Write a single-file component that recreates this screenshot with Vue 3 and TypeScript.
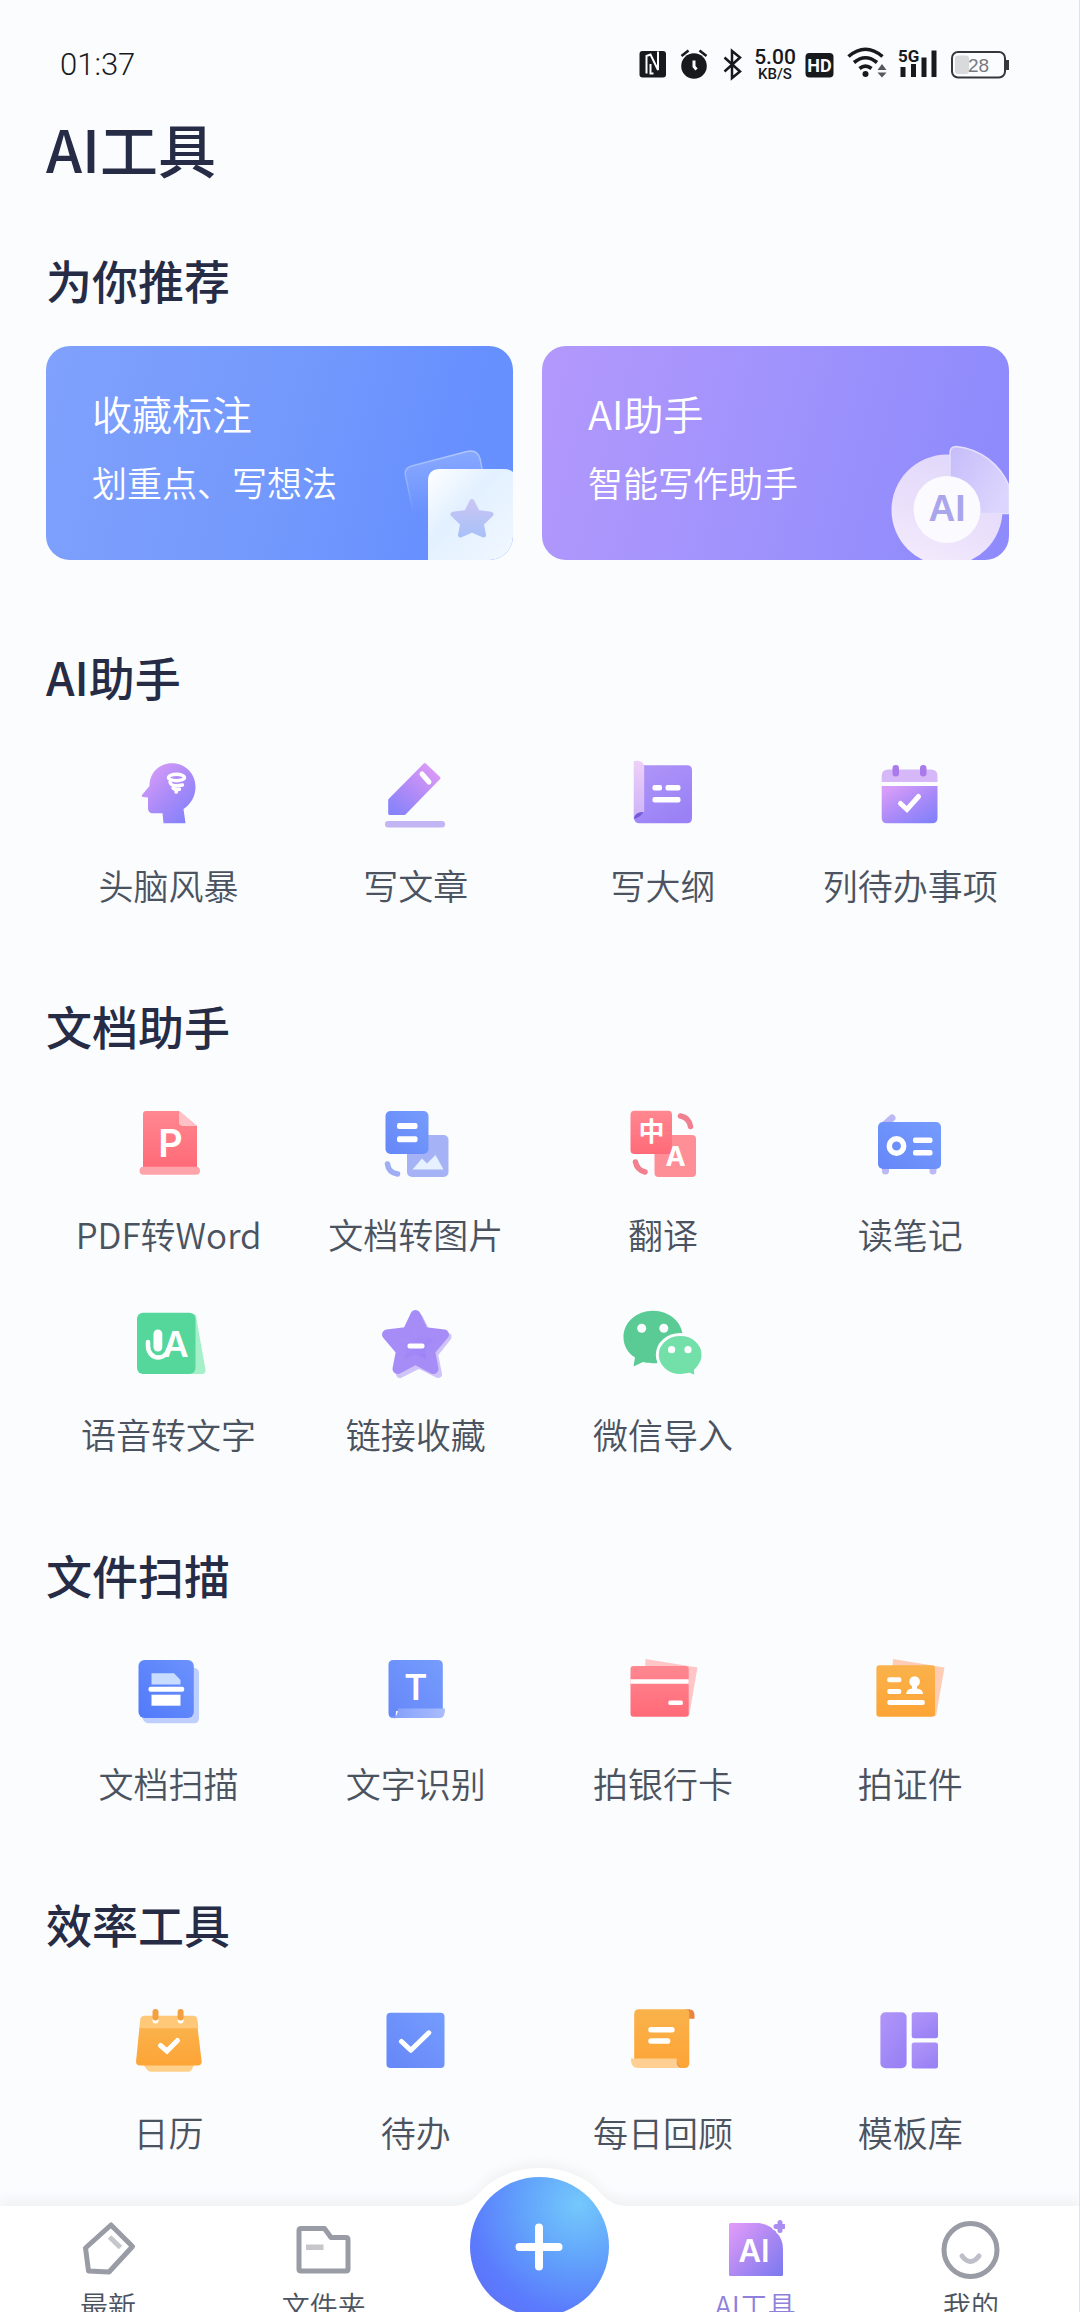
<script setup lang="ts">
interface Tool {
  name: string
  icon: string
}

interface ToolSection {
  title: string
  tools: Tool[]
}

interface Tab {
  name: string
  icon: string
  active?: boolean
}

const letter = 'font-family="Inter, Liberation Sans, sans-serif" text-anchor="middle" fill="#fff"'

// Inner markup of every tool icon, drawn on an 80 x 80 grid.
const icons: Record<string, string> = {
  head: `<path fill="url(#g-violet)" d="M43 8.300C56 8.300 66.500 18.500 66.500 32c0 9.500-5 17.500-12 22l2 14.300h-22l-1-10H24c-3 0-5-2-5-5V42.500l-5-.5c-1.200-.2-1.500-1.200-.8-2.200L20.500 31C20.500 18 30 8.300 43 8.300Z"/><g fill="none" stroke="#fff" stroke-width="3.400" stroke-linecap="round"><ellipse cx="47.500" cy="22.500" rx="8" ry="3.200"/><path d="M41 27c1 5 7 4 12.500 3M44 33c1 2 3 1.800 6.500 1.200M47 37h.5"/></g>`,
  pen: `<path fill="url(#g-violet-up)" stroke="url(#g-violet-up)" stroke-width="3" stroke-linejoin="round" d="M48.800 9.500 63 23 28.500 58.500H13.700V45Z"/><path stroke="#fff" stroke-width="5" stroke-linecap="round" d="m46 19 7 8"/><rect x="9" y="66" width="60" height="6.500" rx="3" fill="#c3b5f4"/>`,
  outline: `<path fill="url(#g-purple)" d="M20 10.300h44q5 0 5 5V63.300q0 5-5 5H16.500q-5.500 0-5.500-6L20 55Z"/><path fill="url(#g-fold)" d="M10.700 6q10-1.500 10.500 6v45q-7 .5-10.500 6Z"/><path fill="#7458d8" d="M10.700 64q1-7 9.500-7-2 5-9.500 7Z"/><g fill="#fff"><rect x="29.500" y="30" width="9.500" height="5.600" rx="2"/><rect x="42.500" y="30" width="15" height="5.600" rx="2"/><rect x="29.500" y="42" width="28" height="5.600" rx="2"/></g>`,
  todo: `<path fill="#d6b8f8" d="M11.700 27v-6q0-6.500 6.500-6.500H61q6.500 0 6.500 6.500v6Z"/><path fill="url(#g-violet)" d="M11.700 31h55.800v32q0 5.300-5.300 5.300H17q-5.300 0-5.300-5.300Z"/><g fill="#a97bea"><rect x="22.500" y="10" width="6.500" height="11.500" rx="3.200"/><rect x="50" y="10" width="6.500" height="11.500" rx="3.200"/></g><path fill="none" stroke="#fff" stroke-width="5" stroke-linecap="round" d="m30.500 48.500 6.500 6 11.500-13"/>`,
  pdf: `<path fill="url(#g-red)" d="M14 10q0-3 3-3h33l18 15v42H14Z"/><path fill="#ffc0c6" d="M50 7v11q0 4 4 4h14Z"/><rect x="10.500" y="62.700" width="60.500" height="8" rx="4" fill="#ffa3ab"/><text x="41.500" y="53" font-size="38" font-weight="600" ${letter}>P</text>`,
  docImage: `<rect x="31" y="31" width="41.500" height="42" rx="5" fill="#a5b3f6"/><path fill="#e6f0ff" d="m36.500 65.500 9.500-11 5 5 8.500-8.500L67.500 65.500Z"/><rect x="9.500" y="7" width="43" height="43" rx="5" fill="url(#g-blue)"/><g fill="#fff"><rect x="21" y="19" width="20.500" height="6" rx="2"/><rect x="21" y="32.300" width="20.500" height="6" rx="2"/></g><path fill="none" stroke="#9fadf5" stroke-width="5.500" stroke-linecap="round" d="M11.500 60q1 8.500 10 10"/>`,
  translate: `<rect x="31.500" y="31" width="41.500" height="42" rx="4" fill="#ff8f97"/><rect x="7.500" y="6.700" width="41.500" height="43.300" rx="4" fill="url(#g-red)"/><text x="28.500" y="37" font-size="26" font-weight="700" text-anchor="middle" fill="#fff" font-family="Noto Sans CJK SC, sans-serif">中</text><text x="52.500" y="62" font-size="27" font-weight="700" ${letter}>A</text><g fill="none" stroke="#f0808f" stroke-width="5.500" stroke-linecap="round"><path d="M57.500 12q8.500 1.500 10 10.500M12.500 58q1.500 8 9.500 10"/></g>`,
  radio: `<path stroke="#bcb8f6" stroke-width="7" stroke-linecap="round" d="m13 22 9-8M15.500 62v5M63 62v5"/><rect x="8" y="18" width="63" height="47" rx="5" fill="url(#g-blue)"/><circle cx="26.500" cy="42" r="7.200" fill="none" stroke="#fff" stroke-width="5.500"/><g fill="#fff"><rect x="43" y="33.500" width="19.500" height="5.500" rx="2"/><rect x="43" y="46" width="19.500" height="5.500" rx="2"/></g>`,
  voice: `<path fill="#a5f0c8" d="M62 10q4-1 5 2l9.500 54q0 4-3.500 4H60Z"/><rect x="8" y="8.700" width="58.500" height="61.300" rx="6" fill="#55d79b"/><rect x="24.500" y="25.500" width="8.800" height="22" rx="4.400" fill="#fff"/><path fill="none" stroke="#fff" stroke-width="4.500" stroke-linecap="round" d="M19 38v4c0 6 4 11.500 10.500 11.500 5.500 0 8-3 10-8"/><text x="46.500" y="53" font-size="36" font-weight="600" ${letter}>A</text>`,
  star: `<path fill="#cfc3f8" stroke="#cfc3f8" stroke-width="8" stroke-linejoin="round" transform="translate(3.500 3)" d="m39.500 11 8.500 17 20 2-13.500 17 4 20-19-9.500-19 9.500 4-20L10.500 30l20-2Z"/><path fill="url(#g-purple)" stroke="#a58cf6" stroke-width="10" stroke-linejoin="round" d="m39.500 11 8 17 20.500 2.500-14 16.500 3.500 18-18-9.500-18 9.500 3.500-18-14-16.500L31.500 28Z"/><rect x="31.500" y="39.500" width="17" height="5" rx="2" fill="#fff"/>`,
  wechat: `<path fill="#5acb95" d="M30 6.700c16.500 0 29.800 11.500 29.800 26.500S46.500 59.300 30 59.300c-3.500 0-7-.4-10-1.200L10.500 62.500l1.500-9C5 49 .5 42 .5 33.200.5 18.200 13.500 6.700 30 6.700Z"/><path fill="#73dfa9" stroke="#fafcfe" stroke-width="3" d="M57.300 30.500c12.500 0 22.700 8.700 22.700 20.300 0 6.500-3 11.500-7.500 15.500l.5 6.500-6.500-2.500c-3 .8-6 1.200-9.200 1.200-12.500 0-23-9-23-20.700s10.500-20.300 23-20.300Z"/><g fill="#fafcfe"><circle cx="18.700" cy="24.300" r="4.500"/><circle cx="40.800" cy="24.300" r="4.500"/><circle cx="48.600" cy="45.700" r="3.600"/><circle cx="65" cy="45.700" r="3.600"/></g>`,
  scan: `<path fill="#bfcffd" d="M60 14q10 0 10 6v45q0 5.300-5.300 5.300H20q-5 0-7-6Z"/><rect x="9.500" y="7" width="55.300" height="58" rx="6" fill="url(#g-blue-deep)"/><path fill="#c8dcff" d="M22.500 20.300H45L51.500 27v4.500h-29Z"/><rect x="19.500" y="33.700" width="35.700" height="5" rx="2" fill="#fff"/><path fill="#fff" d="M22.500 41.700h29v11h-29Z"/>`,
  text: `<path fill="url(#g-blue)" d="M12.500 12q0-5 5-5h44.300q5 0 5 5v46H20q0 7-3 7-4.500 0-4.500-5Z"/><path fill="#7d99fb" d="M14 62q3 3 6 0v3q-4 1-6-3Z"/><path fill="url(#g-roll)" d="M22 55.500h47q0 9.500-5 9.500H17q5-2 5-9.500Z"/><text x="39.700" y="47" font-size="35" font-weight="600" ${letter}>T</text>`,
  bank: `<path fill="#ffc6c8" d="M22.500 6 74.500 14.500 66 63H20Z"/><path fill="url(#g-red)" d="M7.500 16q0-3 3-3h52.200q3 0 3 3v44.700q0 3-3 3H10.500q-3 0-3-3Z"/><path fill="#fff" d="M7.500 26.300h58.200v4.400H7.500Z"/><rect x="45.400" y="47.500" width="14.400" height="4.500" rx="1.500" fill="#fff"/>`,
  idCard: `<path fill="#ffcdb6" d="M23 6 74.500 14.500 66 63H20Z"/><rect x="6.400" y="12.300" width="58.600" height="51.400" rx="3" fill="url(#g-orange)"/><g fill="#fff"><rect x="17.300" y="24.200" width="14" height="5" rx="2"/><rect x="17.300" y="36" width="14" height="5" rx="2"/><rect x="17.300" y="47" width="37.500" height="5" rx="2"/><circle cx="44.600" cy="28.500" r="5.300"/><path d="M42 31h5v4.500q6 .8 6 5.500H36.200q0-4.700 5.800-5.500Z"/></g>`,
  calendar: `<path fill="#ffd08a" d="M14.400 63H65l-2.400 5q-1 1.700-3 1.700H21.500q-2 0-3-1.700Z"/><path fill="url(#g-orange)" d="M10.500 25h58l4.100 34q.4 4.500-4 4.500H11q-4.300 0-3.900-4.500Z"/><path fill="#ffc878" d="m10.300 26.300 1-9q.5-3.600 4-3.600h49q3.500 0 4 3.600l1.200 9Z"/><g fill="#fff"><rect x="23.500" y="15" width="6" height="6.500" rx="3"/><rect x="48.600" y="15" width="6" height="6.500" rx="3"/></g><g fill="#f4a040"><rect x="23.500" y="7" width="6" height="11.500" rx="3"/><rect x="48.600" y="7" width="6" height="11.500" rx="3"/></g><path fill="none" stroke="#fff" stroke-width="5" stroke-linecap="round" d="m31.500 43.500 6.500 5.500 10.500-10.500"/>`,
  check: `<rect x="10.500" y="10.700" width="58" height="55.300" rx="4" fill="url(#g-blue)"/><path fill="none" stroke="#fff" stroke-width="5" stroke-linecap="round" stroke-linejoin="round" d="m25.500 39.500 9.300 8.800 18-17.500"/>`,
  review: `<path fill="#e8853f" d="M62 7.300h4q5.500 0 5.500 6v3.500H62Z"/><path fill="url(#g-orange)" d="M11.200 12q0-4.700 4.700-4.700H63q3.300 0 3.300 4V61q0 5-5 5H50L11.200 58Z"/><path fill="#ffce92" d="M7.800 56.500h45.700Q54 64 59 66H15q-7 0-7.200-9.500Z"/><path fill="#b5702a" d="M53.500 57.500q.5 6.500 5.500 8.500-5.500-.5-5.500-8.500Z"/><g fill="#fff"><rect x="25.300" y="25" width="26.300" height="5.500" rx="2.500"/><rect x="25.300" y="36.300" width="22" height="5.500" rx="2.500"/></g>`,
  template: `<g fill="url(#g-purple)"><rect x="10.400" y="10.300" width="26.200" height="56" rx="5"/><rect x="41.700" y="10.300" width="26.300" height="26" rx="2.500"/><rect x="41.700" y="40.500" width="26.300" height="26" rx="2.500"/></g>`,
}

const sections: ToolSection[] = [
  {
    title: 'AI助手',
    tools: [
      { name: '头脑风暴', icon: 'head' },
      { name: '写文章', icon: 'pen' },
      { name: '写大纲', icon: 'outline' },
      { name: '列待办事项', icon: 'todo' },
    ],
  },
  {
    title: '文档助手',
    tools: [
      { name: 'PDF转Word', icon: 'pdf' },
      { name: '文档转图片', icon: 'docImage' },
      { name: '翻译', icon: 'translate' },
      { name: '读笔记', icon: 'radio' },
      { name: '语音转文字', icon: 'voice' },
      { name: '链接收藏', icon: 'star' },
      { name: '微信导入', icon: 'wechat' },
    ],
  },
  {
    title: '文件扫描',
    tools: [
      { name: '文档扫描', icon: 'scan' },
      { name: '文字识别', icon: 'text' },
      { name: '拍银行卡', icon: 'bank' },
      { name: '拍证件', icon: 'idCard' },
    ],
  },
  {
    title: '效率工具',
    tools: [
      { name: '日历', icon: 'calendar' },
      { name: '待办', icon: 'check' },
      { name: '每日回顾', icon: 'review' },
      { name: '模板库', icon: 'template' },
    ],
  },
]

// Tab icons use a 60 x 60 grid.
const leftTabs: Tab[] = [
  {
    name: '最新',
    icon: `<path fill="none" stroke="#999ba5" stroke-width="5" stroke-linejoin="round" d="M33 6 54.500 27.500 31 53 10.500 52 7.500 29Z"/><path stroke="#c6c7ca" stroke-width="5" d="m31.500 18 11 10.500"/>`,
  },
  {
    name: '文件夹',
    icon: `<path fill="none" stroke="#999ba5" stroke-width="5" stroke-linejoin="round" d="M7 9.500h23.500l6.500 9h15q2 0 2 2V50q0 2-2 2H7q-2 0-2-2V11.500q0-2 2-2Z"/><path fill="#c6c7ca" d="M12 25.500h17.500v5.500H12Z"/>`,
  },
]

const rightTabs: Tab[] = [
  {
    name: 'AI工具',
    active: true,
    icon: `<path fill="url(#g-tab)" d="M4 5.500Q4 4 5.500 4H34c14 2 24 13 24 26v25.500q0 1.500-1.500 1.500h-51Q4 57 4 55.500Z"/><path stroke="#fff" stroke-width="8" stroke-linecap="round" d="M55 3.500v8M51 7.500h8"/><path stroke="#a98df0" stroke-width="5" stroke-linecap="round" d="M55 3.500v8M51 7.500h8"/><text x="29" y="43" font-size="31" font-weight="600" ${letter}>AI</text>`,
  },
  {
    name: '我的',
    icon: `<circle cx="29.500" cy="31" r="26.500" fill="none" stroke="#999ba5" stroke-width="5"/><path fill="none" stroke="#bfbfca" stroke-width="5" stroke-linecap="round" d="M21 37q8.500 11 17 0"/>`,
  },
]
</script>

<template>
  <div class="page">
    <svg class="defs" width="0" height="0" aria-hidden="true">
      <defs>
        <linearGradient id="g-violet" x1="0.1" y1="0.1" x2="0.9" y2="1">
          <stop offset="0" stop-color="#d79cf8" /><stop offset="0.5" stop-color="#a98af8" /><stop offset="1" stop-color="#8181fb" />
        </linearGradient>
        <linearGradient id="g-violet-up" x1="0.9" y1="0" x2="0.1" y2="1">
          <stop offset="0" stop-color="#e09bf6" /><stop offset="0.55" stop-color="#b08bf7" /><stop offset="1" stop-color="#8783fa" />
        </linearGradient>
        <linearGradient id="g-purple" x1="0" y1="0" x2="0.6" y2="1">
          <stop offset="0" stop-color="#b096f8" /><stop offset="1" stop-color="#9a82f6" />
        </linearGradient>
        <linearGradient id="g-fold" x1="0" y1="0" x2="0" y2="1">
          <stop offset="0" stop-color="#eed0f8" /><stop offset="1" stop-color="#cdb4f8" />
        </linearGradient>
        <linearGradient id="g-red" x1="0" y1="0" x2="0" y2="1">
          <stop offset="0" stop-color="#ff8790" /><stop offset="1" stop-color="#ff6a78" />
        </linearGradient>
        <linearGradient id="g-blue" x1="1" y1="0" x2="0" y2="1">
          <stop offset="0" stop-color="#759cfd" /><stop offset="1" stop-color="#6687f8" />
        </linearGradient>
        <linearGradient id="g-blue-deep" x1="1" y1="0" x2="0" y2="1">
          <stop offset="0" stop-color="#6b92fc" /><stop offset="1" stop-color="#527afa" />
        </linearGradient>
        <linearGradient id="g-roll" x1="0" y1="0" x2="1" y2="0">
          <stop offset="0" stop-color="#85a0fb" /><stop offset="1" stop-color="#a9bcfd" />
        </linearGradient>
        <linearGradient id="g-orange" x1="0" y1="0" x2="0" y2="1">
          <stop offset="0" stop-color="#fab24b" /><stop offset="1" stop-color="#fda436" />
        </linearGradient>
        <linearGradient id="g-tab" x1="0" y1="0.1" x2="1" y2="1">
          <stop offset="0" stop-color="#e09af9" /><stop offset="0.5" stop-color="#ab88f2" /><stop offset="1" stop-color="#7a79f0" />
        </linearGradient>
      </defs>
    </svg>

    <header class="status">
      <time class="clock">01:37</time>
      <div class="indicators">
        <svg width="41" height="40" viewBox="0 0 41 40" aria-hidden="true">
          <rect x="0.500" y="7" width="26.500" height="26.500" rx="3" fill="#18191c" />
          <path d="M7.500 29.500V12l4-1.500 7.500 15.500V7.500M11.500 20v9.500h3" fill="none" stroke="#fafcfe" stroke-width="2" />
        </svg>
        <svg width="42" height="40" viewBox="0 0 42 40" aria-hidden="true">
          <circle cx="14" cy="22" r="12.800" fill="#18191c" />
          <path d="m1.500 12 7-5.500M26.500 12l-7-5.500" stroke="#18191c" stroke-width="2.600" />
          <path d="M14 16.500v6l2.500 3" fill="none" stroke="#fafcfe" stroke-width="3" />
        </svg>
        <svg width="29" height="40" viewBox="0 0 29 40" aria-hidden="true">
          <path d="m2.500 13.500 15.500 14-8 6.500V7l8 6.500-15.500 14" fill="none" stroke="#18191c" stroke-width="2.500" />
        </svg>
        <div class="speed"><span class="rate">5.00</span><span class="unit">KB/S</span></div>
        <svg width="48" height="40" viewBox="0 0 48 40" aria-hidden="true">
          <rect x="6.500" y="9" width="28" height="24.500" rx="4" fill="#18191c" />
          <text x="20.500" y="28" font-family="Roboto, Liberation Sans, sans-serif" font-size="18" font-weight="700" text-anchor="middle" fill="#fafcfe">HD</text>
        </svg>
        <svg width="51" height="40" viewBox="0 0 51 40" aria-hidden="true">
          <g fill="none" stroke="#18191c" stroke-width="3.600">
            <path d="M1.500 12.500q17-14.500 34 0M7 18.500q11.500-9.500 23 0M12.500 24.500q6-4.800 12 0" />
          </g>
          <circle cx="18.500" cy="30" r="3" fill="#18191c" />
          <path d="m30.500 26 4.500-6 4.500 6ZM30.500 28.500l4.500 5 4.500-5Z" fill="#55575c" />
        </svg>
        <svg width="53" height="40" viewBox="0 0 53 40" aria-hidden="true">
          <text x="0" y="18" font-family="Roboto, Liberation Sans, sans-serif" font-size="17" font-weight="700" fill="#18191c">5G</text>
          <g fill="#18191c">
            <rect x="2.500" y="23" width="5" height="10" /><rect x="13" y="20" width="5" height="13" />
            <rect x="23.500" y="13.500" width="5" height="19.500" /><rect x="33.500" y="6.500" width="5" height="26.500" />
          </g>
        </svg>
        <svg width="58" height="40" viewBox="0 0 58 40" aria-hidden="true">
          <rect x="1" y="8" width="53" height="25.500" rx="6" fill="none" stroke="#35373b" stroke-width="2" />
          <rect x="4" y="11.500" width="14" height="18.500" rx="3" fill="#d9dadc" />
          <path d="M56.500 16v10" stroke="#35373b" stroke-width="3" />
          <text x="27.500" y="28" font-family="Liberation Sans, sans-serif" font-size="19" text-anchor="middle" fill="#77797d">28</text>
        </svg>
      </div>
    </header>

    <main class="content">
      <h1>AI工具</h1>

      <section class="recommend">
        <h2>为你推荐</h2>
        <div class="cards">
          <button type="button" class="card blue">
            <span class="card-title">收藏标注</span>
            <span class="card-note">划重点、写想法</span>
            <svg class="art" width="130" height="120" viewBox="0 0 130 120" aria-hidden="true">
              <defs>
                <linearGradient id="a-sheet" x1="0" y1="0" x2="1" y2="1">
                  <stop offset="0" stop-color="#fff" /><stop offset="0.4" stop-color="#e2f0ff" /><stop offset="1" stop-color="#f1f8ff" />
                </linearGradient>
                <linearGradient id="a-back" x1="0" y1="0" x2="0" y2="1">
                  <stop offset="0" stop-color="#fff" stop-opacity="0.220" /><stop offset="0.7" stop-color="#fff" stop-opacity="0" />
                </linearGradient>
                <linearGradient id="a-line" x1="0" y1="0" x2="0" y2="1">
                  <stop offset="0" stop-color="#b0c6ff" /><stop offset="0.7" stop-color="#b0c6ff" stop-opacity="0" />
                </linearGradient>
                <linearGradient id="a-star" x1="0" y1="0" x2="0" y2="1">
                  <stop offset="0" stop-color="#c9c5f3" /><stop offset="1" stop-color="#a9c1f8" />
                </linearGradient>
              </defs>
              <path d="M36 100 22.500 36q-1.500-8 6-10L84 11.500q10-2.500 13 7l12 60Z" fill="url(#a-back)" stroke="url(#a-line)" stroke-width="1.500" />
              <path d="M45 120V41q0-12 12-12h64q6 0 9 3v88Z" fill="url(#a-sheet)" />
              <path d="m89 61.500 5.500 11 13.500 1.800-9.700 9.500 2.200 11.200L89 90l-11.500 5 2.200-11.200L70 74.300l13.500-1.800Z" fill="url(#a-star)" stroke="url(#a-star)" stroke-width="5" stroke-linejoin="round" />
            </svg>
          </button>
          <button type="button" class="card violet">
            <span class="card-title">AI助手</span>
            <span class="card-note">智能写作助手</span>
            <svg class="art" width="130" height="120" viewBox="0 0 130 120" aria-hidden="true">
              <defs>
                <linearGradient id="a-ring" x1="0.7" y1="0" x2="0.3" y2="1">
                  <stop offset="0" stop-color="#e0d8fb" /><stop offset="0.6" stop-color="#ebe0fb" /><stop offset="1" stop-color="#f4ebfd" />
                </linearGradient>
                <linearGradient id="a-petal" x1="0" y1="0" x2="1" y2="0.6">
                  <stop offset="0" stop-color="#c5bcfa" /><stop offset="1" stop-color="#dcd5fd" />
                </linearGradient>
              </defs>
              <circle cx="68" cy="70" r="55.500" fill="url(#a-ring)" />
              <path d="M71 40V13q0-6.500 6.500-6.500C101 9 121 24 130 46v27.500h-28Z" fill="url(#a-petal)" stroke="#e4dffd" stroke-width="1.500" />
              <circle cx="68" cy="69.500" r="33.500" fill="#fbfafe" />
              <text x="68" y="81" font-family="Liberation Sans, sans-serif" font-size="37" font-weight="700" text-anchor="middle" fill="#aaa6ec">AI</text>
            </svg>
          </button>
        </div>
      </section>

      <section v-for="section in sections" :key="section.title" class="tools">
        <h2>{{ section.title }}</h2>
        <div class="grid">
          <button v-for="tool in section.tools" :key="tool.name" type="button" class="tool">
            <svg width="80" height="80" viewBox="0 0 80 80" aria-hidden="true" v-html="icons[tool.icon]"></svg>
            <span>{{ tool.name }}</span>
          </button>
        </div>
      </section>
    </main>

    <nav class="tabbar">
      <svg class="hump" width="176" height="40" viewBox="0 0 176 40" aria-hidden="true">
        <path d="M0 40c16 0 22-7 31-17C46 9 66 2 88 2s42 7 57 21c9 10 15 17 31 17Z" fill="#fff" />
      </svg>
      <a v-for="tab in leftTabs" :key="tab.name" href="#" class="tab">
        <svg width="60" height="60" viewBox="0 0 60 60" aria-hidden="true" v-html="tab.icon"></svg>
        <span>{{ tab.name }}</span>
      </a>
      <div class="add-slot">
        <button type="button" class="add" aria-label="新建">
          <svg width="50" height="50" viewBox="0 0 50 50" aria-hidden="true">
            <path d="M25 5.500v39M5.500 25h39" stroke="#fff" stroke-width="8" stroke-linecap="round" />
          </svg>
        </button>
      </div>
      <a v-for="tab in rightTabs" :key="tab.name" href="#" class="tab" :class="{ active: tab.active }">
        <svg width="60" height="60" viewBox="0 0 60 60" aria-hidden="true" v-html="tab.icon"></svg>
        <span>{{ tab.name }}</span>
      </a>
    </nav>
  </div>
</template>

<style>
html,
body {
  margin: 0;
  background: #fafcfe;
}
</style>

<style scoped>
.page {
  box-sizing: border-box;
  display: flex;
  flex-direction: column;
  height: 100vh;
  overflow: hidden;
  border-right: 1px solid #dfe2e6;
  background: #fafcfe;
  color: #262c46;
  font-family: "Noto Sans CJK SC", "Noto Sans", sans-serif;
}

.defs {
  position: absolute;
}

button {
  margin: 0;
  padding: 0;
  border: 0;
  background: none;
  color: inherit;
  font: inherit;
  cursor: pointer;
}

.status {
  display: flex;
  flex: none;
  align-items: flex-start;
  justify-content: space-between;
  height: 40px;
  padding: 44px 70px 0 60px;
  color: #18191c;
}

.clock {
  font-family: Roboto, "Liberation Sans", sans-serif;
  font-size: 31px;
  font-weight: 300;
  line-height: 42px;
}

.indicators {
  display: flex;
}

.speed {
  display: flex;
  flex-direction: column;
  align-items: center;
  width: 48px;
  padding-top: 3px;
  font-family: Roboto, "Liberation Sans", sans-serif;
  font-weight: 500;
}

.rate {
  font-size: 21px;
  line-height: 20px;
}

.unit {
  font-size: 15px;
  line-height: 15px;
}

.content {
  flex: 1;
  min-height: 0;
  overflow: hidden;
}

h1 {
  margin: 24px 46px 0;
  font-size: 58px;
  font-weight: 500;
  line-height: 80px;
}

h2 {
  margin: 0 46px;
  font-size: 46px;
  font-weight: 500;
  line-height: 60px;
}

.recommend {
  margin-top: 61px;
}

.cards {
  display: flex;
  gap: 29px;
  margin: 37px 70px 0 46px;
}

.card {
  position: relative;
  display: flex;
  flex: 1;
  flex-direction: column;
  gap: 16px;
  height: 214px;
  padding: 39px 46px 0;
  overflow: hidden;
  box-sizing: border-box;
  border-radius: 24px;
  color: #fff;
  text-align: left;
}

.blue {
  background: linear-gradient(105deg, #80a1fd, #7399fc 50%, #6790ff 85%);
}

.violet {
  background: linear-gradient(105deg, #b398fc, #a193fc 45%, #8f8bfc 90%);
}

.card-title {
  font-size: 40px;
  font-weight: 350;
  line-height: 56px;
}

.card-note {
  font-size: 35px;
  font-weight: 350;
  line-height: 50px;
}

.art {
  position: absolute;
  right: 0;
  bottom: 0;
}

.tools {
  margin-top: 86px;
}

.grid {
  display: grid;
  grid-template-columns: repeat(4, 1fr);
  row-gap: 46px;
  margin: 49px 45px 0;
}

.tool {
  display: flex;
  flex-direction: column;
  align-items: center;
  gap: 26px;
  color: #4c5360;
  font-size: 35px;
  font-weight: 350;
  line-height: 48px;
  white-space: nowrap;
}

.tabbar {
  position: relative;
  display: grid;
  flex: none;
  grid-template-columns: repeat(5, 1fr);
  height: 106px;
  background: #fff;
  box-shadow: 0 -7px 10px #f1f2f3;
}

.hump {
  position: absolute;
  bottom: 100%;
  left: 50%;
  margin-left: -88px;
  filter: drop-shadow(0 -5px 4px #f1f2f3);
}

.tab {
  display: flex;
  flex-direction: column;
  align-items: center;
  gap: 6px;
  padding-top: 13px;
  color: #4c5360;
  font-size: 28px;
  font-weight: 350;
  line-height: 40px;
  text-decoration: none;
}

.active {
  color: #8f80dc;
}

.add-slot {
  position: relative;
  display: flex;
  justify-content: center;
}

.add {
  position: absolute;
  top: -29px;
  display: flex;
  align-items: center;
  justify-content: center;
  width: 139px;
  height: 139px;
  border-radius: 50%;
  background: radial-gradient(circle at 78% 20%, #74c8fc, #62a4fb 35%, #5b7bfd 70%, #5f6cf4);
}
</style>
